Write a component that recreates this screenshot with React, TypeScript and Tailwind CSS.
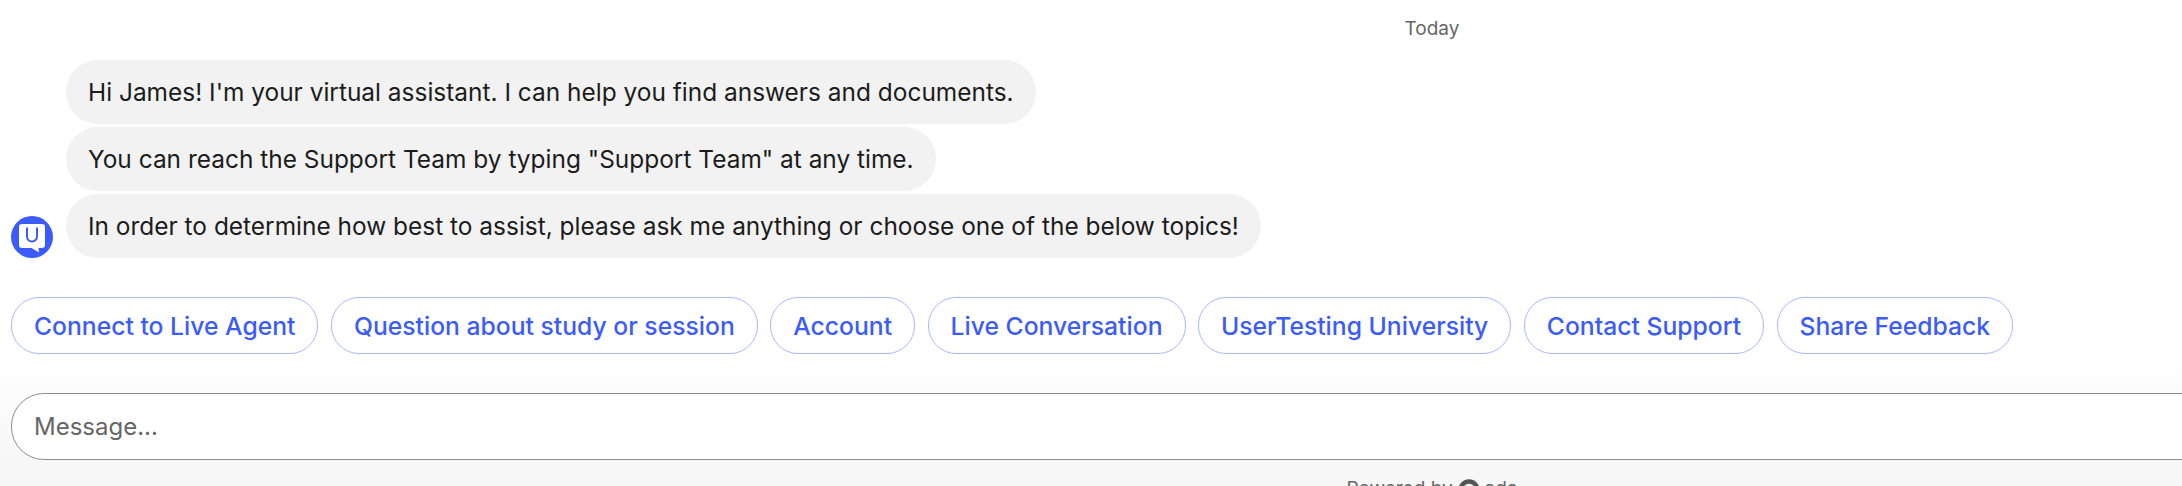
const chips = ["Connect to Live Agent", "Question about study or session", "Account", "Live Conversation", "UserTesting University", "Contact Support", "Share Feedback"];
const messages = [
  "Hi James! I'm your virtual assistant. I can help you find answers and documents.",
  'You can reach the Support Team by typing "Support Team" at any time.',
  "In order to determine how best to assist, please ask me anything or choose one of the below topics!",
];

function Avatar() {
  return (
    <svg viewBox="0 0 42 42" className="w-[42px] h-[42px] shrink-0">
      <circle cx="21" cy="21" r="21" fill="#3b5bfb" />
      <path d="M11 8h20a3 3 0 0 1 3 3v18a3 3 0 0 1-3 3h-3.500l.5 4.500-7.500-4.500h-9.500a3 3 0 0 1-3-3V11a3 3 0 0 1 3-3z" fill="#ffffff" />
      <path d="M16 11.500v9a5 5 0 0 0 10 0v-9" fill="none" stroke="#3b5bfb" strokeWidth="2" />
    </svg>
  );
}

function AdaLogo() {
  return (
    <svg viewBox="0 0 22 22" className="w-[22px] h-[22px] mx-[5px] mt-[3px]">
      <circle cx="11" cy="11" r="8.500" fill="none" stroke="#555555" strokeWidth="4.500" />
    </svg>
  );
}

export default function App() {
  return (
    <div className="w-[2182px] h-[486px] overflow-hidden bg-white" style={{ fontFamily: "Inter, 'Noto Sans', sans-serif" }}>
      <div className="w-[2864px] h-[486px] flex flex-col bg-gradient-to-b from-white from-[73%] to-[#f7f7f7] to-[95%]">
        <div className="h-[60px] shrink-0 pt-[17px] text-center text-[19px] leading-[24px] text-[#666666]">Today</div>
        <div className="flex items-end gap-[13px] pl-[11px] shrink-0">
          <Avatar />
          <div className="flex flex-col items-start gap-[3px]">
            {messages.map((m) => (
              <div key={m} className="h-[64px] flex items-center rounded-[32px] bg-[#f2f2f2] px-[22px] text-[24.45px] text-[#1c1c1c] whitespace-nowrap">
                {m}
              </div>
            ))}
          </div>
        </div>
        <div className="flex gap-[12.500px] pl-[11px] mt-[39px] shrink-0">
          {chips.map((c) => (
            <div key={c} className="h-[57px] pt-[2px] flex items-center rounded-[28px] border border-[#a9b8fb] bg-white px-[22px] text-[24.7px] font-medium text-[#3b5bfb] whitespace-nowrap">
              {c}
            </div>
          ))}
        </div>
        <div className="mx-[11px] mt-[39px] h-[67px] shrink-0 flex items-center rounded-[33px] border border-[#8e8e8e] bg-white px-[22px] text-[24px] text-[#666666]">
          Message...
        </div>
        <div className="mt-[16px] shrink-0 flex justify-center items-center text-[19px] leading-[24px] text-[#666666]">
          <span>Powered by</span>
          <AdaLogo />
          <span>ada</span>
        </div>
      </div>
    </div>
  );
}
